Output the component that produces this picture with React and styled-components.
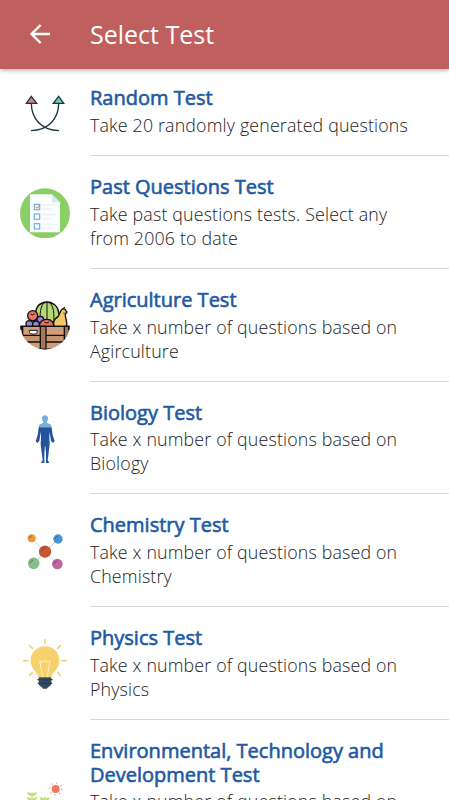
import React from "react";
import styled, {createGlobalStyle} from "styled-components";

const GlobalStyle = createGlobalStyle`
* {
    box-sizing: border-box;
}

body {
    margin: 0;
    background: #fff;
    font-family: "Open Sans", "Noto Sans", sans-serif;
    overflow: hidden;
}
`;

const Screen = styled.div`
display: flex;
flex-direction: column;
height: 800px;
overflow: hidden;
background: #fff;
`;

const Header = styled.header`
display: flex;
align-items: center;
flex: none;
height: 69px;
padding: 0 0 1px 28px;
background: #c0605e;
color: #fff;
box-shadow: 0 1px 5px rgba(0, 0, 0, 0.35);
z-index: 1;

& > svg {
    width: 24px;
    height: 24px;
    margin-right: 38px;
}
`;

const HeaderTitle = styled.h1`
margin: 0;
font-size: 25px;
line-height: 34px;
font-weight: 400;
`;

const List = styled.div`
flex: 1;
min-height: 0;
`;

const Row = styled.div`
display: flex;
align-items: center;
padding-left: 20px;
`;

const Icon = styled.svg`
display: block;
flex: none;
width: 50px;
height: 50px;
margin-right: 20px;
`;

const RowBody = styled.div`
flex: 1;
padding: ${props => (props.$first ? "17px 28px 18.9px 0" : "19px 28px 18.2px 0")};
border-bottom: 1px solid #d9d9d9;
`;

const RowTitle = styled.div`
font-size: 20px;
line-height: 24px;
color: #2159a3;
-webkit-text-stroke: 0.6px #2159a3;
`;

const RowText = styled.div`
margin-top: 2.5px;
font-size: 17.8px;
line-height: 24px;
font-weight: 300;
letter-spacing: 0.17px;
color: #222;
`;

const BackArrow = () => (
    <svg viewBox="0 0 24 24" fill="none" stroke="#fff" strokeWidth="2.4">
        <path d="M22 12H4M12.6 3L3.6 12L12.6 21" />
    </svg>
);

const RandomIcon = () => (
    <Icon viewBox="30 21 150 150" fill="none" stroke="#17383f" strokeWidth="4">
        <path d="M64 67C64 110 92 148 147 149M146 67C146 110 118 148 63 149" />
        <path d="M64 46L80 67H49Z" fill="#df7895" />
        <path d="M146 46L161 67H130Z" fill="#77c5c0" />
    </Icon>
);

const ChecklistIcon = () => (
    <Icon viewBox="30 28 150 150">
        <circle cx="105" cy="104" r="75" fill="#89cf66" />
        <path d="M60 47H126L150 71V161H60Z" fill="#fbfcfe" />
        <path d="M126 47V71H150Z" fill="#d8e7f4" />
        {[85, 114, 143].map(y => (
            <g key={y}>
                <rect x="73" y={y - 8} width="16" height="16" fill="#f4f8fc" stroke="#6daee0" strokeWidth="3.5" />
                <path d={`M97 ${y - 6}H139M97 ${y + 6}H128`} stroke="#edf0f5" strokeWidth="4" />
            </g>
        ))}
        <path d="M77 84L81 89L90 77" fill="none" stroke="#e47c73" strokeWidth="3" />
    </Icon>
);

const CrateIcon = () => (
    <Icon viewBox="30 30 150 150" stroke="#111" strokeWidth="4" strokeLinejoin="round">
        <clipPath id="crate">
            <circle cx="105" cy="104" r="74" />
        </clipPath>
        <path d="M76 110V71C78 50 91 37 111 36C132 37 145 51 147 72V110Z" fill="#b5d879" />
        <path d="M103 38C91 49 89 68 91 105M111 36V105M119 38C131 49 133 68 131 105" fill="none" strokeWidth="3" />
        <path d="M130 110C130 90 136 85 145 79L154 60C158 54 165 56 167 61L171 66L166 72C164 83 173 92 170 110Z" fill="#f4c965" />
        <path d="M160 56L164 52M161 69H163" fill="none" />
        <circle cx="68" cy="77" r="15" fill="#e87662" />
        <path d="M62 72Q68 78 74 71" fill="none" strokeWidth="3" />
        <circle cx="91" cy="89" r="10" fill="#9583d8" />
        <circle cx="58" cy="102" r="10" fill="#9583d8" />
        <circle cx="78" cy="103" r="10" fill="#9583d8" />
        <path d="M87 111C88 96 97 87 111 88C124 88 132 98 132 111Z" fill="#ea705d" />
        <path d="M103 96Q110 102 117 96" fill="none" strokeWidth="3" />
        <g clipPath="url(#crate)">
            <path d="M30 109H180V180H30Z" fill="#ce9f7b" />
            <path d="M35 136H175V156H35Z" fill="#c49370" />
            <path d="M91 109H108V180H91ZM163 109H178V148L163 164ZM30 109H38V148H30Z" fill="#aa7553" />
            <path d="M42 178H168" fill="none" strokeWidth="5" />
        </g>
        <path d="M34 109H176V120M34 109V120" fill="none" />
        <path d="M58 121H82C82 133 76 132 69 132C62 132 58 131 58 121Z" fill="#fff" strokeWidth="3" />
    </Icon>
);

const BodyIcon = () => (
    <Icon viewBox="30 23 150 150">
        <path d="M96 39C96 27 114 27 114 39C114 45 111 48 110 52L119 56C124 58 125 62 125 68H86C86 61 88 57 92 56L101 52C99 48 96 45 96 39Z" fill="#79aedc" />
        <path d="M86 67H125L128 90L134 107L129 113L123 107L120 88L118 80L118 102C121 117 117 128 116 142L113 164L118 173H108L108 145L106 122H105L103 145L103 173H93L98 164L95 142C94 128 90 117 93 102L93 80L91 88L88 107L82 113L77 107L83 90Z" fill="#24539d" />
        <path d="M87 67H124" stroke="#17478a" strokeWidth="2" strokeDasharray="3 2" />
    </Icon>
);

const atoms = [
    {x: 65, y: 67, r: 12, color: "#e79b3b"},
    {x: 144, y: 69, r: 14, color: "#4a94d2"},
    {x: 71, y: 142, r: 17.5, color: "#84bf89"},
    {x: 142, y: 144, r: 16, color: "#bd679f"},
    {x: 105, y: 107, r: 18.5, color: "#c75730"},
];

const MoleculeIcon = () => (
    <Icon viewBox="30 30 150 150" fill="none">
        <path d="M65 67L142 144M144 69L71 142" stroke="#cfd2d3" strokeWidth="3" />
        {atoms.map(({x, y, r, color}) => (
            <g key={color}>
                <circle cx={x} cy={y} r={r} fill={color} />
                <path
                    d={`M${x - r * 0.6} ${y}Q${x - r * 0.5} ${y - r * 0.5} ${x} ${y - r * 0.6}`}
                    stroke="#27333b"
                    strokeOpacity="0.5"
                    strokeWidth="3"
                />
            </g>
        ))}
    </Icon>
);

const BulbIcon = () => (
    <Icon viewBox="30 29 150 150" fill="none" strokeLinecap="round" overflow="visible">
        <path
            d="M105 34V45M59 52L67 60M151 52L143 60M41 97H54M156 97H168M59 141L67 133M151 141L143 133"
            stroke="#f7d16e"
            strokeWidth="5"
        />
        <path d="M105 54C80 54 62 73 62 97C62 121 82 130 86 147H124C128 130 148 121 148 97C148 73 130 54 105 54Z" fill="#f7d16e" />
        <path d="M98 145L89 97L97 102L103 97L109 102L115 97L120 98L112 145" stroke="#fff2c7" strokeWidth="3" />
        <path d="M86 147H124V166C124 173 114 174 111 181H99C96 174 86 173 86 166Z" fill="#334b60" />
        <path d="M84 154H126M85 165H125" stroke="#263c50" strokeWidth="4" />
    </Icon>
);

const PlantIcon = () => (
    <Icon viewBox="30 98 150 150" fill="none">
        <circle cx="137" cy="176" r="12" fill="#ef7965" />
        <circle cx="137" cy="176" r="18" stroke="#ef7965" strokeWidth="4" strokeDasharray="2.5 11.64" />
        <path d="M66 184V247M104 199V247" stroke="#c1df78" strokeWidth="4" />
        <path
            d="M66 197C57 197 51 193 51 186C60 186 66 189 66 197C66 189 72 186 81 186C81 193 75 197 66 197ZM66 212C57 212 51 208 51 201C60 201 66 204 66 212C66 204 72 201 81 201C81 208 75 212 66 212ZM104 212C95 212 89 208 89 201C98 201 104 204 104 212C104 204 110 201 119 201C119 208 113 212 104 212Z"
            fill="#c1df78"
        />
    </Icon>
);

const tests = [
    {title: "Random Test", text: "Take 20 randomly generated questions", icon: <RandomIcon />},
    {title: "Past Questions Test", text: "Take past questions tests. Select any from 2006 to date", icon: <ChecklistIcon />},
    {title: "Agriculture Test", text: "Take x number of questions based on Agirculture", icon: <CrateIcon />},
    {title: "Biology Test", text: "Take x number of questions based on Biology", icon: <BodyIcon />},
    {title: "Chemistry Test", text: "Take x number of questions based on Chemistry", icon: <MoleculeIcon />},
    {title: "Physics Test", text: "Take x number of questions based on Physics", icon: <BulbIcon />},
    {
        title: "Environmental, Technology and Development Test",
        text: "Take x number of questions based on Environmental",
        icon: <PlantIcon />,
    },
];

const App = () => (
    <Screen>
        <GlobalStyle />
        <Header>
            <BackArrow />
            <HeaderTitle>Select Test</HeaderTitle>
        </Header>
        <List>
            {tests.map(({title, text, icon}, index) => (
                <Row key={title}>
                    {icon}
                    <RowBody $first={index === 0}>
                        <RowTitle>{title}</RowTitle>
                        <RowText>{text}</RowText>
                    </RowBody>
                </Row>
            ))}
        </List>
    </Screen>
);

export default App;
